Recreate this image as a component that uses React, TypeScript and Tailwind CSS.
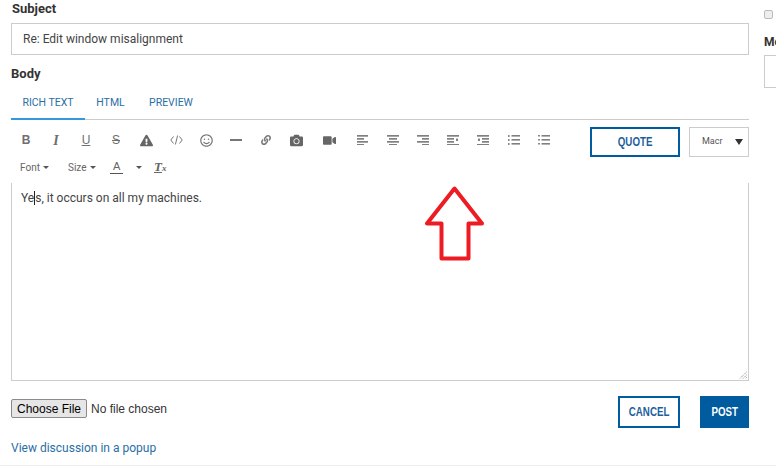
import React from 'react';
import { FaCamera, FaExclamationTriangle, FaRegSmile, FaVideo, FaLink } from 'react-icons/fa';

const Caret = () => (
  <svg width="6" height="3" viewBox="0 0 6 3" className="shrink-0">
    <path d="M0 0h6L3 3z" fill="#555" />
  </svg>
);

// Toolbar slot, every icon sits centered in one of these
const Slot: React.FC<{ className?: string; children: React.ReactNode }> = ({ className = 'w-[30px]', children }) => (
  <div className={`flex h-[16px] items-center justify-center text-[#6f6f6f] ${className}`}>{children}</div>
);

// rows: [x, width] of each horizontal bar in a 12x10 box
const Bars: React.FC<{ rows: number[][]; dot?: number }> = ({ rows, dot }) => (
  <svg width="12" height="10" viewBox="0 0 12 10">
    {rows.map((r, i) => (
      <rect key={i} x={r[0]} y={i * 3} width={r[1]} height="1.7" fill="#808080" />
    ))}
    {dot !== undefined && <rect x={dot} y="3.6" width="2" height="2.4" fill="#808080" />}
  </svg>
);

const ListIcon: React.FC<{ numbered?: boolean }> = ({ numbered }) => (
  <svg width="12" height="10" viewBox="0 0 12 10">
    {[0, 4, 8].map((y) => (
      <React.Fragment key={y}>
        <rect x="0" y={y} width={numbered ? 1.6 : 2} height={numbered ? 2 : 1.5} fill="#888" />
        <rect x="3.5" y={y} width="8.5" height="1.6" fill="#808080" />
      </React.Fragment>
    ))}
  </svg>
);

const App: React.FC = () => {
  return (
    <div className="relative flex h-[466px] w-[776px] overflow-hidden bg-white font-['Roboto',sans-serif] text-[#333]">
      <div className="ml-[11px] flex h-[465px] w-[738px] shrink-0 flex-col border-b-0">
        <label className="mt-px h-[16px] pl-px text-[13px] font-bold leading-[16px] text-[#333]">Subject</label>
        <div className="mt-[6px] flex h-[32px] items-center border border-[#ccc] pl-[11px] text-[12px] text-[#444]">
          Re: Edit window misalignment
        </div>
        <label className="mt-[11px] h-[16px] text-[13px] font-bold leading-[16px]">Body</label>

        <div className="mt-[10px] flex h-[28px] border-b border-[#ccc] text-[10.5px] text-[#2a6fa5]">
          <div className="-mb-px flex w-[74px] justify-center border-b-2 border-[#3498db] pt-[3px]">RICH TEXT</div>
          <div className="flex w-[50px] justify-center pt-[3px] pl-[1px]">HTML</div>
          <div className="ml-[1px] flex w-[70px] justify-center pt-[3px]">PREVIEW</div>
        </div>

        <div className="flex h-[63px] justify-between pt-[7px]">
          <div>
            <div className="flex h-[26px] items-center">
              <Slot><span className="font-['Liberation_Sans',sans-serif] text-[12px] font-bold">B</span></Slot>
              <Slot><span className="font-['Liberation_Serif',serif] text-[14px] font-bold italic">I</span></Slot>
              <Slot><span className="font-['Liberation_Sans',sans-serif] text-[12px] underline">U</span></Slot>
              <Slot><span className="font-['Liberation_Sans',sans-serif] text-[12px] line-through">S</span></Slot>
              <Slot><FaExclamationTriangle size={13} color="#666" /></Slot>
              <Slot>
                <svg width="13" height="10" viewBox="0 0 13 10" fill="none" stroke="#777" strokeWidth="1">
                  <path d="M3.5 1.5 0.8 5l2.7 3.5M9.5 1.5 12.2 5 9.5 8.5M7.6 0.5 5.4 9.5" />
                </svg>
              </Slot>
              <Slot><FaRegSmile size={13} color="#777" /></Slot>
              <Slot><div className="h-[2px] w-[12px] bg-[#777]" /></Slot>
              <Slot><FaLink size={10} color="#777" /></Slot>
              <Slot><FaCamera size={13} color="#666" /></Slot>
              <Slot className="w-[37px]"><FaVideo size={13} color="#666" /></Slot>
              <Slot><Bars rows={[[0, 11], [0, 7], [0, 11], [0, 7]]} /></Slot>
              <Slot><Bars rows={[[0, 12], [2, 8], [0, 12], [2, 8]]} /></Slot>
              <Slot><Bars rows={[[0, 12], [5, 7], [0, 12], [5, 7]]} /></Slot>
              <Slot><Bars rows={[[0, 12], [0, 7], [0, 7], [0, 12]]} dot={9} /></Slot>
              <Slot><Bars rows={[[0, 12], [5, 7], [5, 7], [0, 12]]} dot={1} /></Slot>
              <Slot className="w-[31px]"><ListIcon numbered /></Slot>
              <Slot><ListIcon /></Slot>
            </div>
            <div className="mt-px flex h-[26px] items-center text-[10px] text-[#666]">
              <div className="ml-[9px] flex w-[48px] items-center gap-[3px]">Font <Caret /></div>
              <div className="flex w-[42px] items-center gap-[3px]">Size <Caret /></div>
              <div className="flex w-[26px] items-center pb-px">
                <span className="border-b border-[#555] px-[3px] font-['Liberation_Sans',sans-serif] text-[11px] leading-[13px]">A</span>
              </div>
              <div className="mr-[12px] flex items-center"><Caret /></div>
              <span className="font-['Liberation_Serif',serif] text-[13px] font-bold italic text-[#666]">
                <span className="underline">T</span><span className="text-[9px]">x</span>
              </span>
            </div>
          </div>
          <div className="flex gap-[9px]">
            <button className="flex h-[30px] w-[90px] items-center justify-center border-[2px] border-[#005b9f] font-['Liberation_Sans',sans-serif] text-[13px] font-bold text-[#1d5f9c]">
              <span className="inline-block scale-x-[0.75]">QUOTE</span>
            </button>
            <div className="flex h-[30px] w-[60px] items-center justify-between border border-[#ccc] pl-[12px] pr-[5px] text-[9px] text-[#555]">
              <span>Macr</span>
              <svg width="8" height="6" viewBox="0 0 8 6"><path d="M0 0h8L4 6z" fill="#333" /></svg>
            </div>
          </div>
        </div>

        <div className="relative h-[198px] border-x border-b border-[#ccc] pl-[9px] pt-[7px] text-[12px] leading-[16px] text-[#444]">
          <span>Ye</span><span className="border-l border-[#222]">s</span><span>, it occurs on all my machines.</span>
          <svg width="8" height="8" viewBox="0 0 8 8" className="absolute bottom-[1px] right-[1px]">
            <path d="M7.5 1 1 7.5M7.5 4 4 7.5M7.5 6.5 6.5 7.5" stroke="#777" strokeWidth="1" strokeDasharray="1 1" />
          </svg>
        </div>

        <div className="mt-[15px] flex items-start justify-between">
          <div className="mt-[3px] flex items-center font-['Liberation_Sans',sans-serif] text-[12px] text-[#333]">
            <button className="h-[19px] w-[76px] rounded-[2px] border border-[#8a8a8a] bg-[#e6e6e6] text-[12px] leading-[16px] text-black">
              Choose File
            </button>
            <span className="ml-[4px]">No file chosen</span>
          </div>
          <div className="flex gap-[20px]">
            <button className="flex h-[32px] w-[62px] items-center justify-center border-[2px] border-[#005b9f] font-['Liberation_Sans',sans-serif] text-[13px] font-bold text-[#1d5f9c]">
              <span className="inline-block scale-x-[0.75]">CANCEL</span>
            </button>
            <button className="flex h-[32px] w-[49px] items-center justify-center bg-[#005b9f] font-['Liberation_Sans',sans-serif] text-[13px] font-bold text-white">
              <span className="inline-block scale-x-[0.75]">POST</span>
            </button>
          </div>
        </div>
        <a className="mt-[12px] text-[12px] leading-[16px] text-[#2a6fa5]">View discussion in a popup</a>
      </div>

      <div className="ml-[15px] w-[12px] shrink-0">
        <div className="mt-[10px] h-[9px] w-[9px] rounded-[2px] border border-[#bbb] bg-[#eee]" />
        <div className="mt-[16px] h-[14px] whitespace-nowrap text-[12px] font-bold leading-[14px] text-[#333]">Me</div>
        <div className="mt-[6px] h-[33px] w-[40px] border border-[#ccc]" />
      </div>

      <div className="absolute bottom-0 left-0 h-px w-[776px] bg-[#eee]" />

      {/* Red arrow annotation drawn over the page */}
      <svg className="absolute left-[420px] top-[182px]" width="70" height="84" viewBox="0 0 70 84" fill="none">
        <path
          d="M34.5 6.5 7 41.5H21.5V76.5H48.5V41.5H62Z"
          stroke="#ed1c24"
          strokeWidth="4"
          strokeLinejoin="round"
        />
      </svg>
    </div>
  );
};

export default App;
